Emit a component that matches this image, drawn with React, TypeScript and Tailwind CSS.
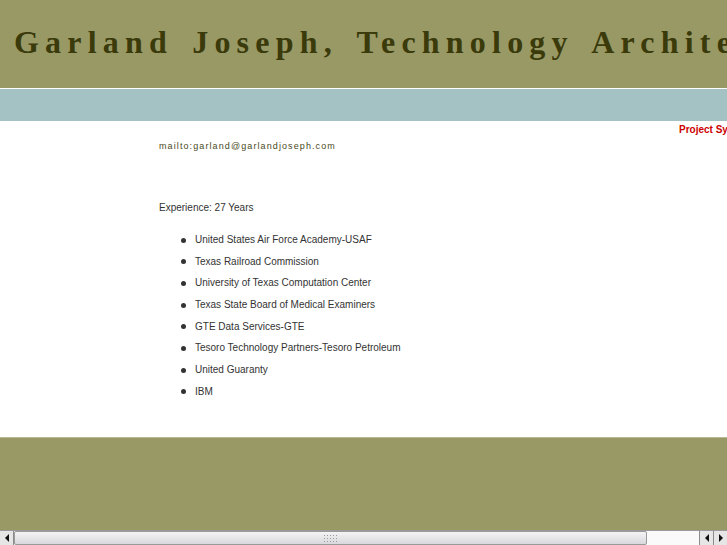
import React from "react";

const items = [
  "United States Air Force Academy-USAF",
  "Texas Railroad Commission",
  "University of Texas Computation Center",
  "Texas State Board of Medical Examiners",
  "GTE Data Services-GTE",
  "Tesoro Technology Partners-Tesoro Petroleum",
  "United Guaranty",
  "IBM",
];

function Arrow({ dir }: { dir: "l" | "r" }) {
  return (
    <svg width="6" height="8" viewBox="0 0 6 8">
      {dir === "l" ? <path d="M5 0 L1 4 L5 8 Z" fill="#111" /> : <path d="M1 0 L5 4 L1 8 Z" fill="#111" />}
    </svg>
  );
}

export default function App() {
  return (
    <div className="w-[727px] h-[545px] overflow-hidden flex flex-col bg-white" style={{ fontFamily: '"Liberation Sans", Arial, sans-serif' }}>
      <div className="flex-1 overflow-hidden flex flex-col">
        <div className="h-[88px] bg-[#999966] pl-[14px] pt-[26px] whitespace-nowrap overflow-hidden">
          <div
            className="text-[32px] leading-[32px] font-bold tracking-[6.2px] [word-spacing:5px] text-[#3a3a0a]"
            style={{ fontFamily: '"Liberation Serif", "Times New Roman", serif' }}
          >
            Garland Joseph, Technology Architect
          </div>
        </div>
        <div className="h-[1px] bg-white" />
        <div className="h-[32px] bg-[#a4c2c3]" />
        <div className="h-[316px] bg-white pt-[3px]">
          <div className="pl-[679px] whitespace-nowrap overflow-hidden text-[10px] leading-[12px] font-bold text-[#cc0000]">
            Project Systems Architecture
          </div>
          <div className="pl-[159px] mt-[4px] text-[9px] leading-[12px] tracking-[1.1px] text-[#4a4a1c]">
            mailto:garland@garlandjoseph.com
          </div>
          <div className="pl-[159px] mt-[50px] text-[10px] leading-[12px] text-[#333333]">Experience: 27 Years</div>
          <ul className="pl-[181px] mt-[20px] flex flex-col gap-[9.7px]">
            {items.map((t) => (
              <li key={t} className="flex items-center gap-[9px] text-[10px] leading-[12px] text-[#333333]">
                <span className="w-[5px] h-[5px] rounded-full bg-[#333333] shrink-0" />
                <span>{t}</span>
              </li>
            ))}
          </ul>
        </div>
        <div className="flex-1 bg-[#999966] border-t border-[#b8b892]" />
      </div>
      <div className="h-[15px] flex bg-[#f2f2f2] border-t border-[#9a9a9a]">
        <div className="w-[14px] flex items-center justify-center bg-[#e6e6e6] border-r border-[#8c8c8c]">
          <Arrow dir="l" />
        </div>
        <div className="w-[633px] flex items-center justify-center rounded-[2px] border border-[#9a9a9a] bg-gradient-to-b from-[#f4f4f6] to-[#d9d9dd]">
          <div className="grid grid-cols-5 gap-[2px]">
            {Array.from({ length: 15 }).map((_, i) => (
              <span key={i} className="w-[1px] h-[1px] bg-[#999]" />
            ))}
          </div>
        </div>
        <div className="flex-1 bg-[#fafafa]" />
        <div className="w-[14px] flex items-center justify-center bg-[#e6e6e6] border-l border-[#8c8c8c]">
          <Arrow dir="l" />
        </div>
        <div className="w-[14px] flex items-center justify-center bg-[#e6e6e6] border-l border-[#8c8c8c]">
          <Arrow dir="r" />
        </div>
      </div>
    </div>
  );
}
